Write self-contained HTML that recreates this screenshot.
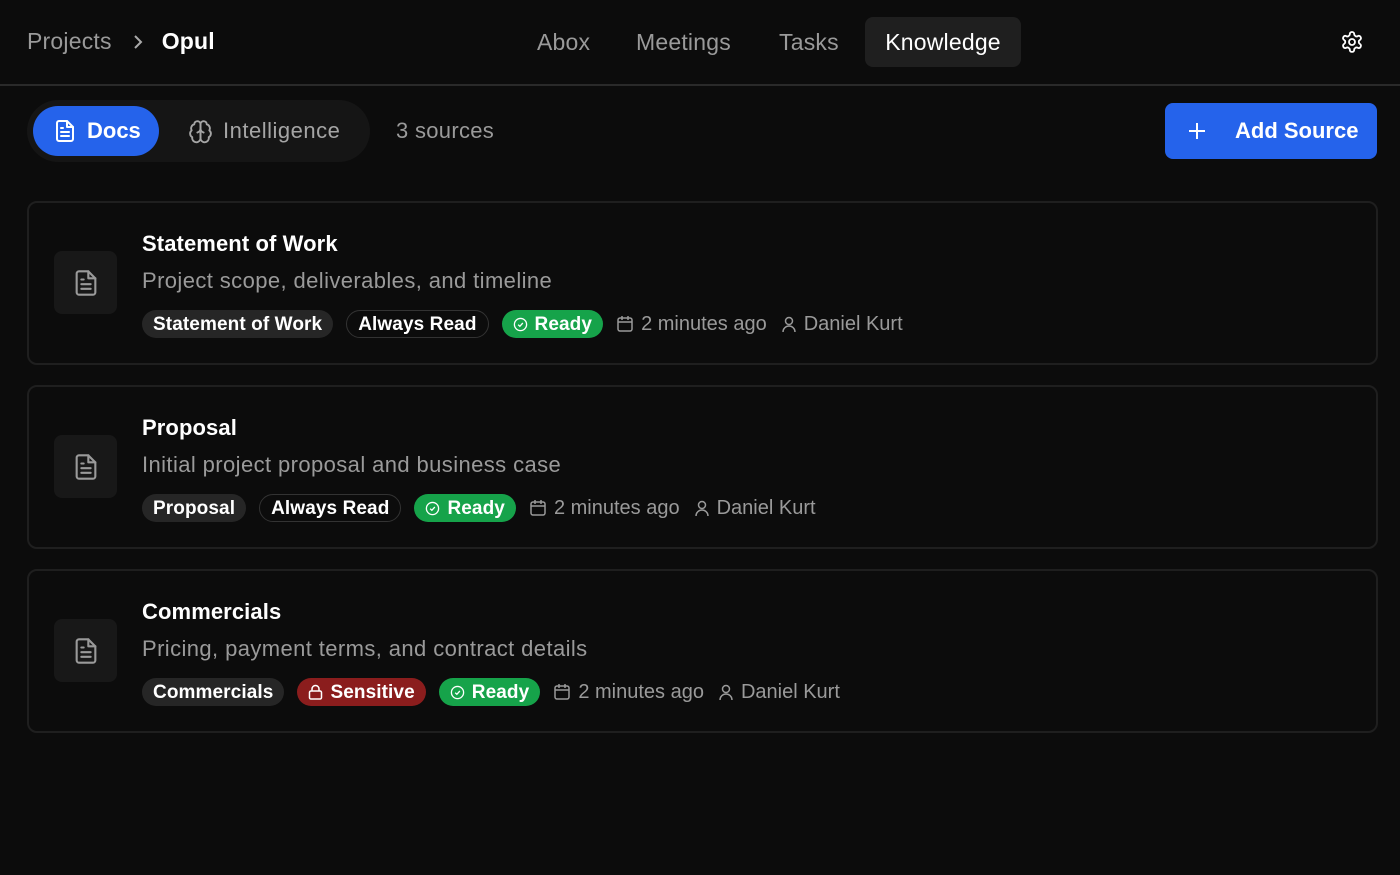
<!DOCTYPE html>
<html><head><style>
*{box-sizing:border-box;margin:0;padding:0}
body{width:1400px;height:875px;background:#0c0c0c;font-family:"Liberation Sans",sans-serif;color:#fff;position:relative;overflow:hidden}
.abs{position:absolute}
.hdr{top:0;left:0;width:1400px;height:86px;border-bottom:2px solid #2a2a2a}
.crumb{left:27px;top:28px;font-size:23px;color:#9a9a9a;display:flex;align-items:center;letter-spacing:0.2px}
.crumb b{color:#fff;margin-left:18px}
.nav{top:17px;left:0;font-size:23px;color:#9a9a9a;letter-spacing:0.2px}
.nav div{position:absolute;top:0;height:50px;line-height:50px;border-radius:8px;white-space:nowrap}
.nav .on{background:#1f1f1f;color:#fff;width:156px;text-align:center}
.tabs{left:27px;top:100px;width:343px;height:62px;background:#151515;border-radius:31px}
.docs{left:33px;top:106px;width:126px;height:50px;background:#2563eb;border-radius:25px;display:flex;align-items:center;padding-left:20px;font-size:22px;font-weight:bold}
.intel{left:188px;top:106px;height:50px;display:flex;align-items:center;font-size:22px;color:#a5a5a5;letter-spacing:0.5px}
.src{left:396px;top:118px;font-size:22px;color:#9a9a9a;letter-spacing:0.3px}
.add{left:1165px;top:103px;width:212px;height:56px;background:#2563eb;border-radius:8px;display:flex;align-items:center;font-size:22px;font-weight:bold}
.card{left:27px;width:1351px;height:164px;border:2px solid #1f1f1f;border-radius:10px}
.ico{left:25px;top:48px;width:63px;height:63px;background:#181818;border-radius:8px;display:flex;align-items:center;justify-content:center}
.t{left:113px;top:28px;font-size:22px;font-weight:bold;letter-spacing:0.1px}
.d{left:113px;top:65px;font-size:22px;color:#9a9a9a;letter-spacing:0.4px}
.row{left:113px;top:106px;display:flex;align-items:center;height:30px;font-size:19px}
.tag{height:28px;padding:2px 11px 0;border-radius:14px;font-weight:bold;margin-right:13px;display:flex;align-items:center;letter-spacing:0.1px}
.tag svg{margin-top:-2px}
.g{background:#262626}
.o{border:1.5px solid #333}
.r{background:#16a34a}
.s{background:#8b1d1d}
.m{color:#9a9a9a;font-size:20px;display:flex;align-items:center;margin-right:14px}
.m svg{margin-right:7px}
</style></head><body>
<div class="abs hdr"></div>
<div class="abs crumb">Projects <svg style="margin-left:20px" width="12" height="16" viewBox="0 0 12 16"><path d="M3 2l6 6-6 6" stroke="#aaa" stroke-width="2" fill="none"/></svg><b>Opul</b></div>
<div class="abs nav"><div style="left:537px">Abox</div><div style="left:636px">Meetings</div><div style="left:779px">Tasks</div><div class="on" style="left:865px">Knowledge</div></div>
<svg class="abs" style="left:1340px;top:30px" width="24" height="24" viewBox="0 0 24 24" fill="none" stroke="#fff" stroke-width="1.8" stroke-linejoin="round"><path d="M12.2 2h-.4a2 2 0 0 0-2 2v.2a2 2 0 0 1-1 1.7l-.4.3a2 2 0 0 1-2 0l-.2-.1a2 2 0 0 0-2.7.7l-.2.4a2 2 0 0 0 .7 2.7l.2.1a2 2 0 0 1 1 1.7v.5a2 2 0 0 1-1 1.7l-.2.1a2 2 0 0 0-.7 2.7l.2.4a2 2 0 0 0 2.7.7l.2-.1a2 2 0 0 1 2 0l.4.3a2 2 0 0 1 1 1.7v.2a2 2 0 0 0 2 2h.4a2 2 0 0 0 2-2v-.2a2 2 0 0 1 1-1.7l.4-.3a2 2 0 0 1 2 0l.2.1a2 2 0 0 0 2.7-.7l.2-.4a2 2 0 0 0-.7-2.7l-.2-.1a2 2 0 0 1-1-1.7v-.5a2 2 0 0 1 1-1.7l.2-.1a2 2 0 0 0 .7-2.7l-.2-.4a2 2 0 0 0-2.7-.7l-.2.1a2 2 0 0 1-2 0l-.4-.3a2 2 0 0 1-1-1.7V4a2 2 0 0 0-2-2z"/><circle cx="12" cy="12" r="3"/></svg>
<div class="abs tabs"></div>
<div class="abs docs"><svg width="24" height="24" viewBox="0 0 24 24" fill="none" stroke="#fff" stroke-width="2" stroke-linejoin="round" stroke-linecap="round"><path d="M14 2H6a2 2 0 0 0-2 2v16a2 2 0 0 0 2 2h12a2 2 0 0 0 2-2V8z"/><path d="M14 2v6h6M8 13h8M8 17h8M8 9h2"/></svg><span style="margin-left:10px">Docs</span></div>
<div class="abs intel"><svg width="25" height="25" viewBox="0 0 24 24" fill="none" stroke="#a5a5a5" stroke-width="1.8" stroke-linejoin="round" stroke-linecap="round"><path d="M12 5a3 3 0 1 0-6 .1 4 4 0 0 0-2.5 5.8 4 4 0 0 0 .6 6.6A4 4 0 1 0 12 18z"/><path d="M12 5a3 3 0 1 1 6 .1 4 4 0 0 1 2.5 5.8 4 4 0 0 1-.6 6.6A4 4 0 1 1 12 18z"/><path d="M12 5v13M15 13a4.2 4.2 0 0 1-3-4 4.2 4.2 0 0 1-3 4"/></svg><span style="margin-left:10px">Intelligence</span></div>
<div class="abs src">3 sources</div>
<div class="abs add"><svg style="margin-left:22px" width="20" height="20" viewBox="0 0 20 20"><path d="M10 2v16M2 10h16" stroke="#fff" stroke-width="2"/></svg><span style="margin-left:28px">Add Source</span></div>

<div class="abs card" style="top:201px">
<div class="abs ico"><svg width="28" height="28" viewBox="0 0 24 24" fill="none" stroke="#9a9a9a" stroke-width="1.8" stroke-linejoin="round" stroke-linecap="round"><path d="M14 2H6a2 2 0 0 0-2 2v16a2 2 0 0 0 2 2h12a2 2 0 0 0 2-2V8z"/><path d="M14 2v6h6M8 13h8M8 17h8M8 9h2"/></svg></div>
<div class="abs t">Statement of Work</div>
<div class="abs d">Project scope, deliverables, and timeline</div>
<div class="abs row"><div class="tag g">Statement of Work</div><div class="tag o">Always Read</div><div class="tag r"><svg width="15" height="15" viewBox="0 0 16 16" style="margin-right:7px"><circle cx="8" cy="8" r="6.5" stroke="#fff" stroke-width="1.4" fill="none"/><path d="M5.5 8.2l1.8 1.7 3.2-3.5" stroke="#fff" stroke-width="1.4" fill="none"/></svg>Ready</div>
<div class="m"><svg width="18" height="18" viewBox="0 0 18 18" fill="none" stroke="#9a9a9a" stroke-width="1.5"><rect x="2" y="3" width="14" height="13" rx="2"/><path d="M2 7h14M6 1v4M12 1v4"/></svg>2 minutes ago</div>
<div class="m"><svg width="16" height="18" viewBox="0 0 16 18" fill="none" stroke="#9a9a9a" stroke-width="1.5"><circle cx="8" cy="6" r="3.5"/><path d="M2 17a6 6 0 0 1 12 0"/></svg>Daniel Kurt</div></div>
</div>

<div class="abs card" style="top:385px">
<div class="abs ico"><svg width="28" height="28" viewBox="0 0 24 24" fill="none" stroke="#9a9a9a" stroke-width="1.8" stroke-linejoin="round" stroke-linecap="round"><path d="M14 2H6a2 2 0 0 0-2 2v16a2 2 0 0 0 2 2h12a2 2 0 0 0 2-2V8z"/><path d="M14 2v6h6M8 13h8M8 17h8M8 9h2"/></svg></div>
<div class="abs t">Proposal</div>
<div class="abs d">Initial project proposal and business case</div>
<div class="abs row"><div class="tag g">Proposal</div><div class="tag o">Always Read</div><div class="tag r"><svg width="15" height="15" viewBox="0 0 16 16" style="margin-right:7px"><circle cx="8" cy="8" r="6.5" stroke="#fff" stroke-width="1.4" fill="none"/><path d="M5.5 8.2l1.8 1.7 3.2-3.5" stroke="#fff" stroke-width="1.4" fill="none"/></svg>Ready</div>
<div class="m"><svg width="18" height="18" viewBox="0 0 18 18" fill="none" stroke="#9a9a9a" stroke-width="1.5"><rect x="2" y="3" width="14" height="13" rx="2"/><path d="M2 7h14M6 1v4M12 1v4"/></svg>2 minutes ago</div>
<div class="m"><svg width="16" height="18" viewBox="0 0 16 18" fill="none" stroke="#9a9a9a" stroke-width="1.5"><circle cx="8" cy="6" r="3.5"/><path d="M2 17a6 6 0 0 1 12 0"/></svg>Daniel Kurt</div></div>
</div>

<div class="abs card" style="top:569px">
<div class="abs ico"><svg width="28" height="28" viewBox="0 0 24 24" fill="none" stroke="#9a9a9a" stroke-width="1.8" stroke-linejoin="round" stroke-linecap="round"><path d="M14 2H6a2 2 0 0 0-2 2v16a2 2 0 0 0 2 2h12a2 2 0 0 0 2-2V8z"/><path d="M14 2v6h6M8 13h8M8 17h8M8 9h2"/></svg></div>
<div class="abs t">Commercials</div>
<div class="abs d">Pricing, payment terms, and contract details</div>
<div class="abs row"><div class="tag g">Commercials</div><div class="tag s"><svg width="15" height="16" viewBox="0 0 15 16" style="margin-right:7px" fill="none" stroke="#fff" stroke-width="1.5"><rect x="1.5" y="7" width="12" height="8" rx="1.5"/><path d="M4 7V5a3.5 3.5 0 0 1 7 0v2"/></svg>Sensitive</div><div class="tag r"><svg width="15" height="15" viewBox="0 0 16 16" style="margin-right:7px"><circle cx="8" cy="8" r="6.5" stroke="#fff" stroke-width="1.4" fill="none"/><path d="M5.5 8.2l1.8 1.7 3.2-3.5" stroke="#fff" stroke-width="1.4" fill="none"/></svg>Ready</div>
<div class="m"><svg width="18" height="18" viewBox="0 0 18 18" fill="none" stroke="#9a9a9a" stroke-width="1.5"><rect x="2" y="3" width="14" height="13" rx="2"/><path d="M2 7h14M6 1v4M12 1v4"/></svg>2 minutes ago</div>
<div class="m"><svg width="16" height="18" viewBox="0 0 16 18" fill="none" stroke="#9a9a9a" stroke-width="1.5"><circle cx="8" cy="6" r="3.5"/><path d="M2 17a6 6 0 0 1 12 0"/></svg>Daniel Kurt</div></div>
</div>
</body></html>
